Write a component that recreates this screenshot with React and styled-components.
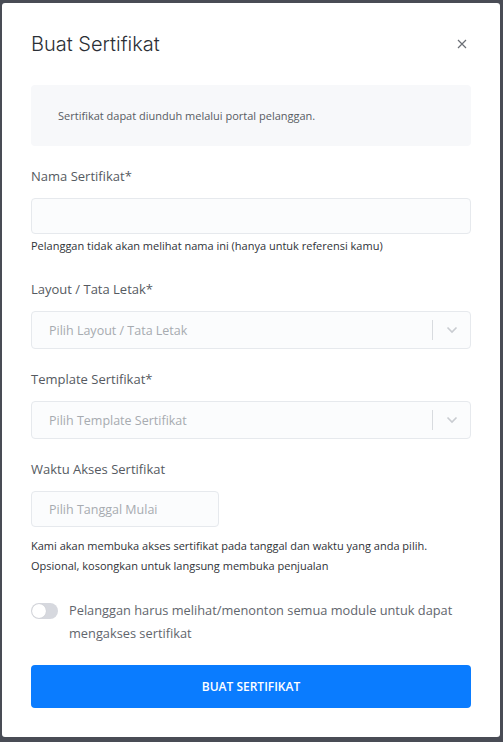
import React, { useState } from "react";
import styled, { createGlobalStyle } from "styled-components";

const GlobalStyle = createGlobalStyle`
  html, body {
    margin: 0;
    padding: 0;
    background: #494c55;
  }
  * { box-sizing: border-box; }
`;

const Backdrop = styled.div`
  width: 503px;
  height: 742px;
  padding: 3px 3px 5px 2px;
  background: #494c55;
`;

const Modal = styled.div`
  width: 498px;
  height: 734px;
  background: #fff;
  border-radius: 3px;
  padding: 0 29px;
  font-family: "Open Sans", sans-serif;
  display: flex;
  flex-direction: column;
`;

const Header = styled.div`
  display: flex;
  justify-content: space-between;
  align-items: center;
  height: 82px;
`;

const Title = styled.h1`
  margin: 0;
  font-family: Inter, "Open Sans", sans-serif;
  font-weight: 300;
  font-size: 20px;
  color: #2b2f36;
`;

const Close = styled.button`
  border: none;
  background: none;
  padding: 0;
  margin-right: 2px;
  width: 14px;
  height: 14px;
  display: flex;
  align-items: center;
  justify-content: center;
  cursor: pointer;
`;

const Info = styled.div`
  background: #f7f8fa;
  border-radius: 4px;
  height: 61px;
  padding: 0 27px;
  display: flex;
  align-items: center;
  font-size: 11px;
  color: #585c63;
`;

const Field = styled.div`
  margin-top: ${(p) => p.$top}px;
  display: flex;
  flex-direction: column;
`;

const Label = styled.label`
  font-size: 13px;
  color: #555a61;
  line-height: 18px;
  margin-bottom: 13px;
`;

const Input = styled.input`
  width: ${(p) => p.$width || "100%"};
  height: 36px;
  border: 1px solid #e6e9ed;
  background: #fbfcfd;
  border-radius: 4px;
  padding: 0 17px;
  font-family: "Open Sans", sans-serif;
  font-size: 12.5px;
  color: #333;
  outline: none;
  &::placeholder { color: #a7abb0; }
`;

const Help = styled.div`
  font-size: 11px;
  color: #2f3338;
  line-height: 20px;
  margin-top: ${(p) => p.$top || 0}px;
`;

const Select = styled.div`
  height: 38px;
  border: 1px solid #e6e9ed;
  background: #fbfcfd;
  border-radius: 4px;
  display: flex;
  align-items: center;
`;

const Placeholder = styled.div`
  flex: 1;
  padding-left: 17px;
  font-size: 12.5px;
  color: #a7abb0;
`;

const Separator = styled.span`
  width: 1px;
  height: 20px;
  background: #d8dbdf;
`;

const Chevron = styled.div`
  width: 37px;
  display: flex;
  justify-content: center;
  align-items: center;
`;

const ToggleRow = styled.div`
  display: flex;
  align-items: flex-start;
  gap: 11px;
  margin-top: 23px;
`;

const Toggle = styled.button`
  flex: none;
  width: 27px;
  height: 16px;
  margin-top: 4px;
  border-radius: 8px;
  border: none;
  padding: 1px;
  background: ${(p) => (p.$on ? "#0a7cff" : "#d6d8de")};
  display: flex;
  justify-content: ${(p) => (p.$on ? "flex-end" : "flex-start")};
  cursor: pointer;
`;

const Knob = styled.span`
  width: 14px;
  height: 14px;
  border-radius: 50%;
  background: #fff;
  box-shadow: 0 0 1px rgba(0, 0, 0, 0.15);
`;

const ToggleText = styled.div`
  font-size: 12.8px;
  line-height: 23px;
  color: #62666d;
`;

const Submit = styled.button`
  margin-top: 20px;
  height: 43px;
  border: none;
  border-radius: 4px;
  background: #0a7cff;
  color: #fff;
  font-family: "Open Sans", sans-serif;
  font-weight: 600;
  font-size: 12px;
  cursor: pointer;
`;

function SelectBox({ placeholder }) {
  return (
    <Select>
      <Placeholder>{placeholder}</Placeholder>
      <Separator />
      <Chevron>
        <svg width="12" height="8" viewBox="0 0 12 8">
          <path d="M1.5 1.5 L6 6 L10.5 1.5" fill="none" stroke="#c9ccd1" strokeWidth="1.6" />
        </svg>
      </Chevron>
    </Select>
  );
}

export default function App() {
  const [on, setOn] = useState(false);
  return (
    <>
      <GlobalStyle />
      <Backdrop>
        <Modal>
          <Header>
            <Title>Buat Sertifikat</Title>
            <Close aria-label="close">
              <svg width="10" height="10" viewBox="0 0 10 10">
                <path d="M1 1 L9 9 M9 1 L1 9" stroke="#6b6f75" strokeWidth="1.2" />
              </svg>
            </Close>
          </Header>
          <Info>Sertifikat dapat diunduh melalui portal pelanggan.</Info>

          <Field $top={21}>
            <Label>Nama Sertifikat*</Label>
            <Input />
            <Help $top={2}>Pelanggan tidak akan melihat nama ini (hanya untuk referensi kamu)</Help>
          </Field>

          <Field $top={24}>
            <Label>Layout / Tata Letak*</Label>
            <SelectBox placeholder="Pilih Layout / Tata Letak" />
          </Field>

          <Field $top={21}>
            <Label>Template Sertifikat*</Label>
            <SelectBox placeholder="Pilih Template Sertifikat" />
          </Field>

          <Field $top={21}>
            <Label>Waktu Akses Sertifikat</Label>
            <Input $width="188px" placeholder="Pilih Tanggal Mulai" />
            <Help $top={9}>Kami akan membuka akses sertifikat pada tanggal dan waktu yang anda pilih.</Help>
            <Help>Opsional, kosongkan untuk langsung membuka penjualan</Help>
          </Field>

          <ToggleRow>
            <Toggle $on={on} onClick={() => setOn(!on)}>
              <Knob />
            </Toggle>
            <ToggleText>
              Pelanggan harus melihat/menonton semua module untuk dapat mengakses sertifikat
            </ToggleText>
          </ToggleRow>

          <Submit>BUAT SERTIFIKAT</Submit>
        </Modal>
      </Backdrop>
    </>
  );
}
